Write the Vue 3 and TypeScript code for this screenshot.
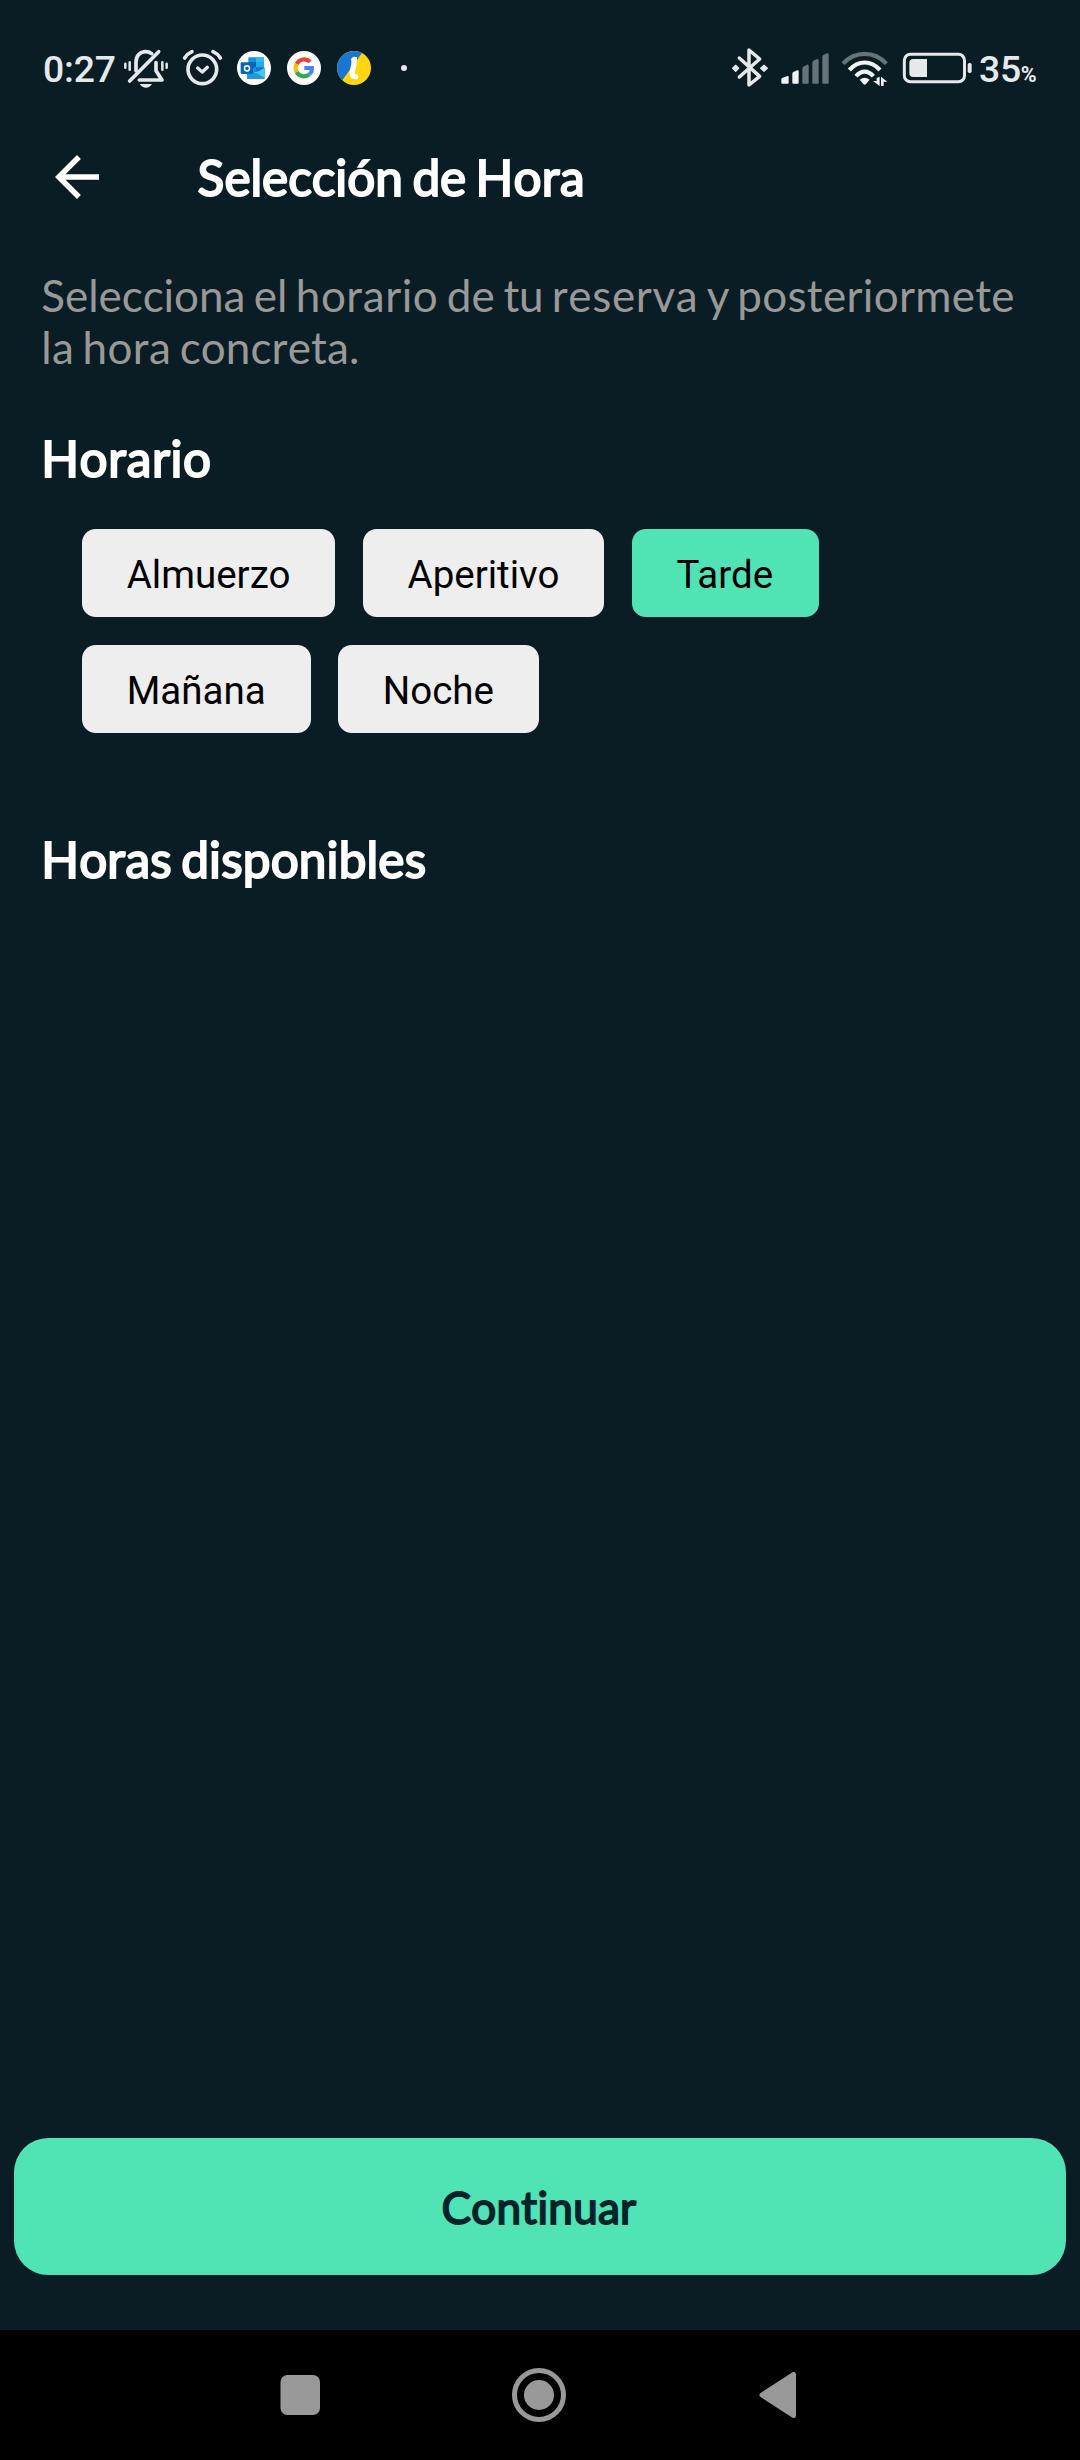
<script setup lang="ts">
import { ref } from 'vue'

interface Word {
  text: string
  spacing: number
}

const w = (text: string, spacing = 0): Word => ({ text, spacing })

const title: Word[] = [w('Selección', -0.05), w('de', -0.1), w('Hora', 0.2)]
const description: Word[] = [
  w('Selecciona', -0.07), w('el'), w('horario', 0.49), w('de', 0.2), w('tu', -0.3),
  w('reserva', 0.63), w('y', -0.6), w('posteriormete', 0.3), w('la', 0.3), w('hora', 0.3), w('concreta.', 0.1),
]
const scheduleHeading: Word[] = [w('Horario', 0.55)]
const hoursHeading: Word[] = [w('Horas', 0.1), w('disponibles', 0.15)]

const schedules: string[] = ['Almuerzo', 'Aperitivo', 'Tarde', 'Mañana', 'Noche']
const selected = ref<string>('Tarde')
</script>

<template>
  <div class="screen">
    <div class="status">
      <span class="clock">0:27</span>
      <svg class="st" width="55" height="80" viewBox="270 0 165 240" fill="none" stroke="#e6e9eb" stroke-linecap="round" stroke-linejoin="round">
        <path d="M286 101v12M299 97v22M397 97v22M410 101v12" stroke-width="7.5" />
        <path d="M318 122V96C318 78 330 65 347 65C354 65 360 67 365 71M378 98V122L396 150H328" stroke-width="11" />
        <path d="M299 153L386 65" stroke-width="11" />
        <path d="M329 162H366C362 169 355 173 348 173S333 169 329 162Z" fill="#e6e9eb" stroke="none" />
      </svg>
      <svg class="st" width="55" height="80" viewBox="435 0 165 240" fill="none" stroke="#e6e9eb" stroke-linecap="round" stroke-linejoin="round">
        <circle cx="517" cy="118" r="43" stroke-width="11" />
        <path d="M503 114L517 126L532 112" stroke-width="10" />
        <path d="M464 84Q472 71 486 65M549 65Q563 71 571 84" stroke-width="11" />
      </svg>
      <svg class="st" width="50" height="80" viewBox="30 0 150 240">
        <circle cx="102" cy="114" r="51" fill="#fff" />
        <rect x="85" y="82" width="47" height="44" rx="3" fill="#1490df" />
        <path d="M85 97h23v15H85z" fill="#0f5fb0" />
        <path d="M108 82h21q3 0 3 3v12h-24z" fill="#35b8f1" />
        <path d="M108 97h24v15h-24z" fill="#28a8ea" />
        <path d="M108 112h24v10h-24z" fill="#1474c4" />
        <path d="M81 112L108 128L135 112V143q0 4-4 4H85q-4 0-4-4z" fill="#1a9be3" />
        <path d="M135 113V144L108 128z" fill="#4cc5f3" />
        <rect x="62" y="97" width="37" height="35" rx="3" fill="#0a64b8" />
        <ellipse cx="81" cy="115" rx="7.5" ry="8" fill="none" stroke="#fff" stroke-width="4.5" />
      </svg>
      <svg class="st" width="50" height="80" viewBox="180 0 150 240" fill="none" stroke-width="12.5">
        <circle cx="252" cy="114" r="51" fill="#fff" />
        <path d="M270.400 95.600A25 25 0 0 0 230 102" stroke="#ea4335" />
        <path d="M230 102A25 25 0 0 0 230 126" stroke="#fbbc05" />
        <path d="M230 126A25 25 0 0 0 268 133" stroke="#34a853" />
        <path d="M253 114H276Q277 125 268 133" stroke="#4285f4" stroke-width="12" />
      </svg>
      <svg class="st" width="50" height="80" viewBox="330 0 150 240">
        <circle cx="402" cy="114" r="51" fill="#ffd60f" />
        <path d="M426 69A51 51 0 0 0 367 151Z" fill="#1976d2" />
        <path d="M403 88Q403 103 398 120Q392 140 407 140" fill="none" stroke="#fff" stroke-width="16" stroke-linecap="round" />
        <path d="M393 86l18-5v14l-14 7z" fill="#fff" />
      </svg>
      <svg class="st" width="50" height="80" viewBox="480 0 150 240">
        <circle cx="552" cy="114" r="9" fill="#e6e9eb" />
      </svg>

      <div class="right">
        <svg class="st bt" width="40" height="80" viewBox="30 0 120 240" fill="none" stroke="#e6e9eb" stroke-width="10.5" stroke-linecap="round" stroke-linejoin="round">
          <path d="M58 84L119 139L87 165V60L119 87L58 141" />
          <path d="M47 106l9 9-9 9-9-9zM132 106l10 9-10 9-10-9z" fill="#e6e9eb" stroke-width="4" />
        </svg>
        <svg class="st sig" width="54" height="80" viewBox="174 0 162 240">
          <path d="M184 147Q185 144 188 143L203 138Q206 137 206 141V158Q206 161 203 161H187Q184 161 184 158z" fill="#f1f2f3" />
          <path d="M217 132Q217 128 220 126L232 121Q236 120 236 124V158Q236 161 233 161H220Q217 161 217 158z" fill="#f1f2f3" />
          <path d="M247 117Q247 113 250 110L261 104Q266 103 266 108V158Q266 161 263 161H250Q247 161 247 158z" fill="#66747a" />
          <path d="M277 99Q277 95 280 92L291 87Q296 86 296 91V158Q296 161 293 161H280Q277 161 277 158z" fill="#66747a" />
          <path d="M307 82Q307 78 310 75L321 70Q326 69 326 74V158Q326 161 323 161H310Q307 161 307 158z" fill="#66747a" />
        </svg>
        <svg class="st wifi" width="51" height="80" viewBox="357 0 153 240" fill="none" stroke="#f1f2f3" stroke-width="12.5">
          <path d="M369 101C406 62 462 62 499 101" stroke="#66747a" />
          <path d="M388 120C415 90 453 90 480 120" />
          <path d="M408 139C423 120 445 120 460 139" />
          <path d="M419 149Q434 137 449 149L438 162Q434 166 430 162z" fill="#f1f2f3" stroke="none" />
          <path d="M479 140V168L459 153H470V144zM483 168V140L502 155H491V168z" fill="#f1f2f3" stroke="none" />
        </svg>
        <svg class="st bat" width="75" height="80" viewBox="60 0 225 240">
          <rect x="73" y="73" width="180.500" height="82" rx="18" fill="none" stroke="#e6e9eb" stroke-width="9" />
          <path d="M141 87V141H100Q88 141 88 129V99Q88 87 100 87z" fill="#e6e9eb" />
          <rect x="263" y="99" width="12" height="30" rx="5" fill="#e6e9eb" />
        </svg>
        <span class="level">35<span class="pct">%</span></span>
      </div>
    </div>

    <header class="header">
      <svg class="back" width="66" height="66" viewBox="0 0 24 24" fill="#fff">
        <path d="M20 11H7.830l5.590-5.590L12 4l-8 8 8 8 1.410-1.410L7.830 13H20v-2z" />
      </svg>
      <h1 class="strong title"><template v-for="(p, i) in title" :key="i"><span :style="{ letterSpacing: p.spacing + 'px' }">{{ p.text }}</span>{{ ' ' }}</template></h1>
    </header>

    <main class="content">
      <p class="desc"><template v-for="(p, i) in description" :key="i"><span :style="{ letterSpacing: p.spacing + 'px' }">{{ p.text }}</span>{{ ' ' }}</template></p>
      <h2 class="strong"><template v-for="(p, i) in scheduleHeading" :key="i"><span :style="{ letterSpacing: p.spacing + 'px' }">{{ p.text }}</span>{{ ' ' }}</template></h2>
      <div class="chips">
        <button
          v-for="name in schedules"
          :key="name"
          class="chip"
          :class="{ active: name === selected }"
          @click="selected = name"
        >{{ name }}</button>
      </div>
      <h2 class="strong"><template v-for="(p, i) in hoursHeading" :key="i"><span :style="{ letterSpacing: p.spacing + 'px' }">{{ p.text }}</span>{{ ' ' }}</template></h2>
    </main>

    <button class="continue">Continuar</button>

    <nav class="nav">
      <svg width="1080" height="130" viewBox="0 0 1080 130" fill="#999">
        <rect x="280.500" y="45" width="39.500" height="40" rx="7" />
        <circle cx="539" cy="65" r="24.500" fill="none" stroke="#999" stroke-width="5" />
        <circle cx="539" cy="65" r="15" />
        <path d="M762 65L793.500 44.500V85.500Z" stroke="#999" stroke-width="5" stroke-linejoin="round" />
      </svg>
    </nav>
  </div>
</template>

<style>
body {
  margin: 0;
  background: #0a1d24;
}
</style>

<style scoped>
.screen {
  width: 1080px;
  height: 2460px;
  display: flex;
  flex-direction: column;
  background: #0a1d24;
  font-family: Lato, sans-serif;
  font-variant-ligatures: none;
  overflow: hidden;
}

.status {
  height: 80px;
  padding-top: 30px;
  display: flex;
  flex: none;
  color: #e6e9eb;
  font-family: Roboto, sans-serif;
  font-weight: 500;
  font-size: 37.3px;
  line-height: 79px;
}

.st {
  display: block;
  flex: none;
}

.clock {
  width: 77px;
  padding-left: 43px;
  white-space: nowrap;
  letter-spacing: -0.2px;
}

.right {
  display: flex;
  margin-left: auto;
  width: 350px;
}

.sig { margin-left: 8px; }
.wifi { margin-left: 7px; }
.bat { margin-left: 10px; }

.level {
  margin-left: 4px;
  white-space: nowrap;
  letter-spacing: -0.3px;
}

.pct {
  font-size: 21.5px;
  font-weight: 700;
}

.header {
  height: 134px;
  flex: none;
  display: flex;
  align-items: center;
}

.back {
  margin-left: 44px;
}

/* Regular Lato emboldened by an outline, so glyph advances stay those of the regular weight */
.strong {
  margin: 0;
  font-size: 49.5px;
  line-height: 59.4px;
  font-weight: 400;
  color: #fff;
  font-kerning: none;
  word-spacing: -3.1px;
  -webkit-text-stroke: 2px currentColor;
  white-space: nowrap;
}

.title {
  padding-top: 2px;
  margin-left: 87.6px;
}

.content {
  flex: 1;
  padding: 25px 41.25px 0;
}

.desc {
  margin: 0 0 56px;
  font-size: 44px;
  line-height: 52px;
  color: #999;
  font-kerning: none;
  word-spacing: -2.77px;
}

.chips {
  display: flex;
  flex-wrap: wrap;
  gap: 27.5px;
  padding: 41px 41px 97px 40.9px;
}

.chip {
  height: 88px;
  padding: 3px 45px 0 44.6px;
  border: 0;
  border-radius: 13.75px;
  background: #eee;
  color: #000;
  font-family: Roboto, sans-serif;
  font-size: 38.5px;
  line-height: 85px;
}

.chip.active {
  padding-right: 46px;
  background: #50e3b6;
}

.continue {
  flex: none;
  height: 137.5px;
  margin: 0 13.75px 55px;
  padding: 2px 2px 0 0;
  border: 0;
  border-radius: 34.4px;
  background: #50e3b6;
  color: #06232a;
  font-family: Lato, sans-serif;
  font-size: 44px;
  letter-spacing: 0.3px;
  font-kerning: none;
  font-variant-ligatures: none;
  -webkit-text-stroke: 1.8px currentColor;
}

.nav {
  height: 130px;
  flex: none;
  background: #000;
}

.nav svg {
  display: block;
}
</style>
